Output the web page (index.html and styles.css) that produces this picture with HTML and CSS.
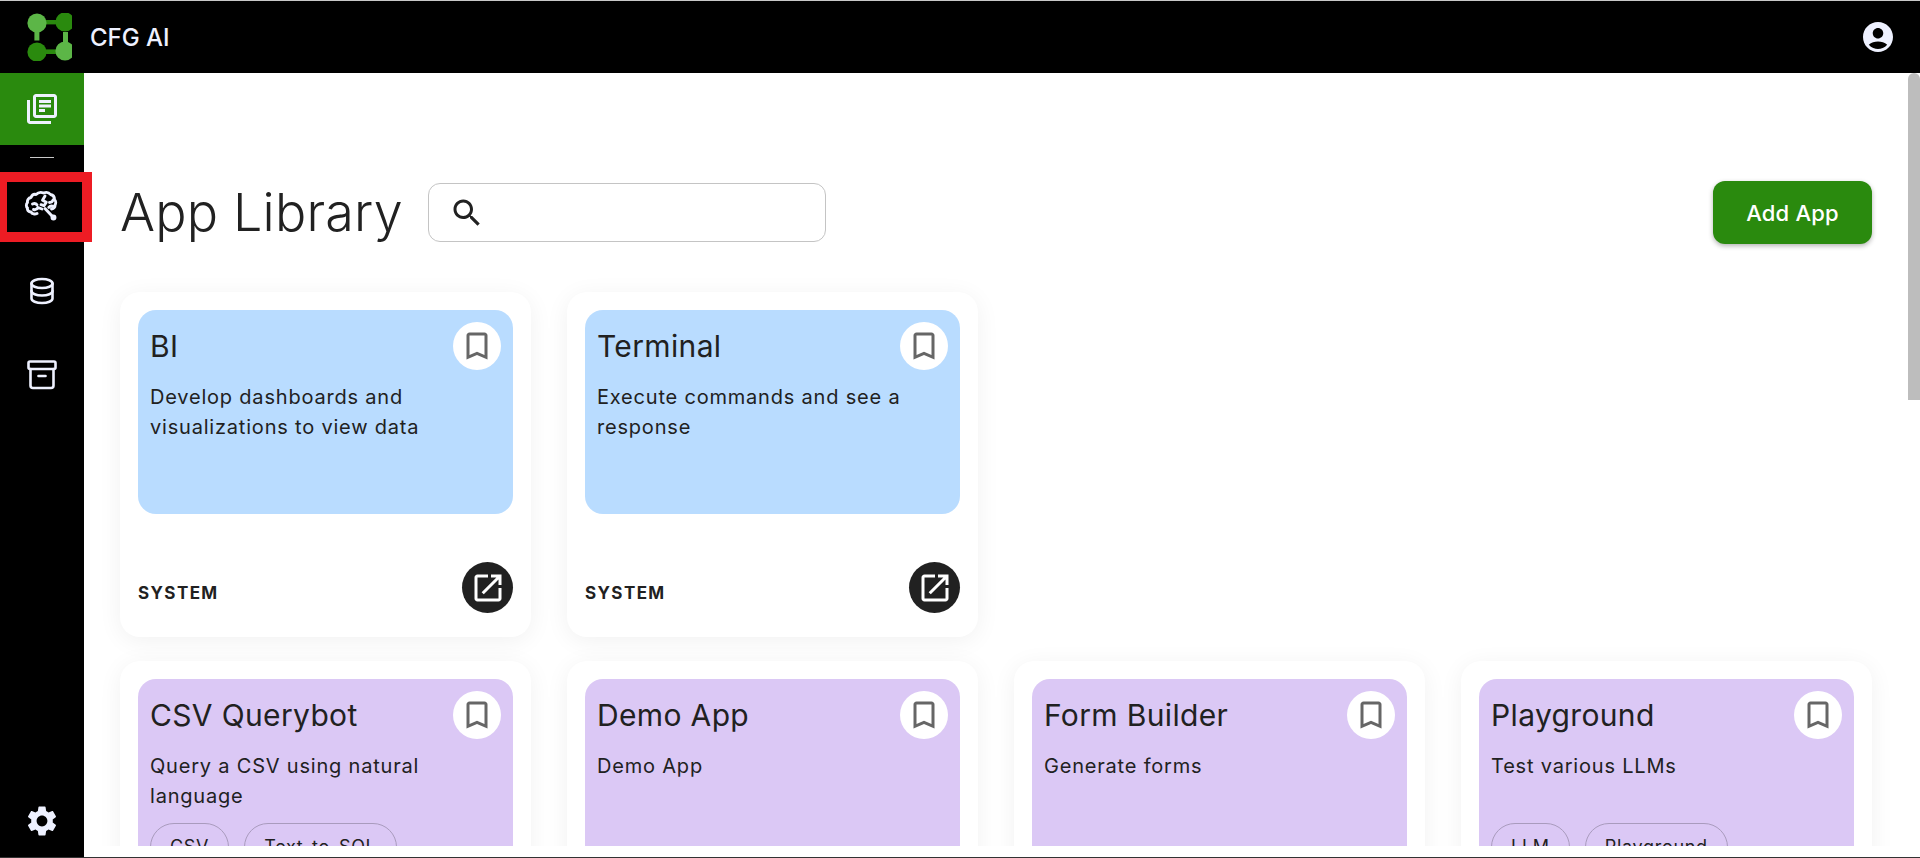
FILE: index.html
```html
<!DOCTYPE html>
<html lang="en">
<head>
    <meta charset="UTF-8">
    <meta name="viewport" content="width=device-width, initial-scale=1.0">
    <title>CFG AI - App Library</title>
    <link rel="stylesheet" href="styles.css">
</head>
<body>
    <div class="page">
        <header class="topbar">
            <svg class="logo" width="48" height="48" viewBox="0 0 48 48">
                <rect x="22" y="7" width="10" height="4.4" fill="#2a8a0e"/>
                <rect x="22" y="36.4" width="10" height="4.6" fill="#2a8a0e"/>
                <rect x="10.4" y="18" width="5" height="9.5" fill="#5cb647"/>
                <rect x="39" y="19" width="5" height="10.5" fill="#5cb647"/>
                <circle cx="13" cy="10" r="9.6" fill="#5cb647"/>
                <circle cx="41" cy="9" r="9.6" fill="#2a8a0e"/>
                <circle cx="13" cy="39" r="9.6" fill="#2a8a0e"/>
                <circle cx="41" cy="38" r="9.6" fill="#5cb647"/>
            </svg>
            <span class="brand">CFG AI</span>
            <svg class="account" width="36" height="36" viewBox="0 0 24 24"><path d="M12 2C6.48 2 2 6.48 2 12s4.48 10 10 10 10-4.48 10-10S17.52 2 12 2zm0 4c1.93 0 3.5 1.57 3.5 3.5S13.93 13 12 13s-3.5-1.57-3.5-3.5S10.07 6 12 6zm0 14c-2.03 0-4.43-.82-6.14-2.88C7.55 15.8 9.68 15 12 15s4.45.8 6.14 2.12C16.43 19.18 14.03 20 12 20z"/></svg>
        </header>

        <div class="workspace">
            <nav class="sidebar">
                <a class="nav-item active">
                    <svg width="36" height="36" viewBox="0 0 24 24"><path d="M4 6H2v14c0 1.1.9 2 2 2h14v-2H4V6zm16-4H8c-1.1 0-2 .9-2 2v12c0 1.1.9 2 2 2h12c1.1 0 2-.9 2-2V4c0-1.1-.9-2-2-2zm0 14H8V4h12v12zM10 9h8v2h-8zm0 3h4v2h-4zm0-6h8v2h-8z"/></svg>
                </a>
                <div class="nav-divider"></div>
                <a class="nav-item nav-brain">
                    <svg class="stroke-icon brain" width="36" height="36" viewBox="0 0 36 36">
                        <path d="M13 23.5c-2 1-5 .5-6-1.5-2.5 0-4-2-3.500-4-1.500-1-1.500-4 0-5.500-.5-2.500 1-4.500 3.500-5 1-2.500 3-3.500 5-3 2-2 5-2.500 7.500-1.500 2.500-1 5.500-.5 7 1.500 2.500.5 4 2.500 4 5 1.500 1.500 1.500 4 .5 5.500.2 2-1.500 3.500-3.500 4"/>
                        <path d="M8.500 14c1.800-1 3.500-.5 4.500.9M21 6l-2.500 4.200 3.800 2-2.300 3.500-3-1M9.500 19.500c2 .6 3.500-.2 4.500-2l4 1.500M29 10c-.4 1.500-1.700 2.500-3.500 2.500M29.500 16.500c-1.800-1-3.500-.6-4.700.9"/>
                        <path d="M21 18.500l7 7.500"/>
                        <circle cx="29.500" cy="27.500" r="1.500"/>
                    </svg>
                </a>
                <a class="nav-item">
                    <svg class="stroke-icon" width="36" height="36" viewBox="0 0 36 36">
                        <ellipse cx="18" cy="10.5" rx="10.5" ry="4.5"/>
                        <path d="M7.500 10.500v15c0 2.500 4.700 4.500 10.500 4.500s10.500-2 10.500-4.500v-15"/>
                        <path d="M7.500 18c0 2.500 4.700 4.500 10.500 4.500s10.500-2 10.500-4.500"/>
                    </svg>
                </a>
                <a class="nav-item">
                    <svg class="stroke-icon" width="36" height="36" viewBox="0 0 36 36">
                        <rect x="4.5" y="4.5" width="27" height="7.5" rx="1.5"/>
                        <path d="M6.500 12v16.500c0 1.500 1 2.500 2.500 2.500h18c1.500 0 2.500-1 2.500-2.500V12"/>
                        <path d="M14.500 19h7"/>
                    </svg>
                </a>
                <a class="nav-item nav-settings">
                    <svg width="36" height="36" viewBox="0 0 24 24"><path d="M19.14 12.94c.04-.3.06-.61.06-.94 0-.32-.02-.64-.07-.94l2.03-1.58c.18-.14.23-.41.12-.61l-1.92-3.32c-.12-.22-.37-.29-.59-.22l-2.39.96c-.5-.38-1.03-.7-1.62-.94l-.36-2.54c-.04-.24-.24-.41-.48-.41h-3.84c-.24 0-.43.17-.47.41l-.36 2.54c-.59.24-1.13.57-1.62.94l-2.39-.96c-.22-.08-.47 0-.59.22L2.74 8.87c-.12.21-.08.47.12.61l2.03 1.58c-.05.3-.09.63-.09.94s.02.64.07.94l-2.03 1.58c-.18.14-.23.41-.12.61l1.92 3.32c.12.22.37.29.59.22l2.39-.96c.5.38 1.03.7 1.62.94l.36 2.54c.05.24.24.41.48.41h3.84c.24 0 .44-.17.47-.41l.36-2.54c.59-.24 1.13-.56 1.62-.94l2.39.96c.22.08.47 0 .59-.22l1.92-3.32c.12-.22.07-.47-.12-.61l-2.01-1.58zM12 15.6c-1.98 0-3.6-1.62-3.6-3.6s1.62-3.6 3.6-3.6 3.6 1.62 3.6 3.6-1.62 3.6-3.6 3.6z"/></svg>
                </a>
                <div class="highlight-box"></div>
            </nav>

            <main class="main">
                <div class="scroll-area">
                    <div class="content">
                        <div class="library-head">
                            <h1>App Library</h1>
                            <div class="search-box">
                                <svg width="36" height="36" viewBox="0 0 24 24"><path d="M15.5 14h-.79l-.28-.27C15.41 12.59 16 11.11 16 9.5 16 5.91 13.09 3 9.5 3S3 5.91 3 9.5 5.91 16 9.5 16c1.61 0 3.09-.59 4.23-1.57l.27.28v.79l5 4.99L20.49 19l-4.99-5zm-6 0C7.01 14 5 11.99 5 9.5S7.01 5 9.5 5 14 7.01 14 9.5 11.99 14 9.5 14z"/></svg>
                            </div>
                            <button class="add-btn">Add App</button>
                        </div>

                        <div class="card-row">
                            <div class="card">
                                <div class="card-body blue">
                                    <div class="card-title"><h2>BI</h2><span class="bookmark"><svg width="36" height="36" viewBox="0 0 24 24"><path d="M17 3H7c-1.1 0-1.99.9-1.99 2L5 21l7-3 7 3V5c0-1.1-.9-2-2-2zm0 15l-5-2.18L7 18V5h10v13z"/></svg></span></div>
                                    <p>Develop dashboards and visualizations to view data</p>
                                </div>
                                <div class="card-foot">
                                    <span class="owner">SYSTEM</span>
                                    <span class="open"><svg width="36" height="36" viewBox="0 0 24 24"><path d="M19 19H5V5h7V3H5c-1.11 0-2 .9-2 2v14c0 1.1.89 2 2 2h14c1.1 0 2-.9 2-2v-7h-2v7zM14 3v2h3.59l-9.83 9.83 1.41 1.41L19 6.41V10h2V3h-7z"/></svg></span>
                                </div>
                            </div>
                            <div class="card">
                                <div class="card-body blue">
                                    <div class="card-title"><h2>Terminal</h2><span class="bookmark"><svg width="36" height="36" viewBox="0 0 24 24"><path d="M17 3H7c-1.1 0-1.99.9-1.99 2L5 21l7-3 7 3V5c0-1.1-.9-2-2-2zm0 15l-5-2.18L7 18V5h10v13z"/></svg></span></div>
                                    <p>Execute commands and see a response</p>
                                </div>
                                <div class="card-foot">
                                    <span class="owner">SYSTEM</span>
                                    <span class="open"><svg width="36" height="36" viewBox="0 0 24 24"><path d="M19 19H5V5h7V3H5c-1.11 0-2 .9-2 2v14c0 1.1.89 2 2 2h14c1.1 0 2-.9 2-2v-7h-2v7zM14 3v2h3.59l-9.83 9.83 1.41 1.41L19 6.41V10h2V3h-7z"/></svg></span>
                                </div>
                            </div>
                        </div>

                        <div class="card-row">
                            <div class="card">
                                <div class="card-body purple">
                                    <div class="card-title"><h2>CSV Querybot</h2><span class="bookmark"><svg width="36" height="36" viewBox="0 0 24 24"><path d="M17 3H7c-1.1 0-1.99.9-1.99 2L5 21l7-3 7 3V5c0-1.1-.9-2-2-2zm0 15l-5-2.18L7 18V5h10v13z"/></svg></span></div>
                                    <p>Query a CSV using natural language</p>
                                    <div class="tags"><span>CSV</span><span>Text-to-SQL</span></div>
                                </div>
                            </div>
                            <div class="card">
                                <div class="card-body purple">
                                    <div class="card-title"><h2>Demo App</h2><span class="bookmark"><svg width="36" height="36" viewBox="0 0 24 24"><path d="M17 3H7c-1.1 0-1.99.9-1.99 2L5 21l7-3 7 3V5c0-1.1-.9-2-2-2zm0 15l-5-2.18L7 18V5h10v13z"/></svg></span></div>
                                    <p>Demo App</p>
                                </div>
                            </div>
                            <div class="card">
                                <div class="card-body purple">
                                    <div class="card-title"><h2>Form Builder</h2><span class="bookmark"><svg width="36" height="36" viewBox="0 0 24 24"><path d="M17 3H7c-1.1 0-1.99.9-1.99 2L5 21l7-3 7 3V5c0-1.1-.9-2-2-2zm0 15l-5-2.18L7 18V5h10v13z"/></svg></span></div>
                                    <p>Generate forms</p>
                                </div>
                            </div>
                            <div class="card">
                                <div class="card-body purple">
                                    <div class="card-title"><h2>Playground</h2><span class="bookmark"><svg width="36" height="36" viewBox="0 0 24 24"><path d="M17 3H7c-1.1 0-1.99.9-1.99 2L5 21l7-3 7 3V5c0-1.1-.9-2-2-2zm0 15l-5-2.18L7 18V5h10v13z"/></svg></span></div>
                                    <p>Test various LLMs</p>
                                    <div class="tags"><span>LLM</span><span>Playground</span></div>
                                </div>
                            </div>
                        </div>
                    </div>
                    <div class="scrollbar"><div class="scroll-thumb"></div></div>
                </div>
            </main>
        </div>
    </div>
</body>
</html>
```

FILE: styles.css
```css
* {
    box-sizing: border-box;
}
html, body {
    margin: 0;
    height: 100%;
    overflow: hidden;
}
body {
    font-family: Inter, "Liberation Sans", sans-serif;
    color: #212121;
    background: #fff;
}
.page {
    height: 858px;
    display: flex;
    flex-direction: column;
    border-top: 1px solid #c8c8c8;
    border-bottom: 1px solid #333;
}

/* top bar */
.topbar {
    flex: 0 0 72px;
    background: #000;
    display: flex;
    align-items: center;
    padding: 0 24px;
}
.logo {
    flex: none;
}
.brand {
    margin-left: 18px;
    font-size: 24px;
    font-weight: 500;
    color: #eef1ff;
}
.account {
    margin-left: auto;
    fill: #eef1ff;
}

.workspace {
    flex: 1;
    display: flex;
    min-height: 0;
}

/* left nav */
.sidebar {
    position: relative;
    flex: 0 0 84px;
    background: #000;
    display: flex;
    flex-direction: column;
}
.nav-item {
    height: 72px;
    flex: none;
    display: flex;
    align-items: center;
    justify-content: center;
    margin-bottom: 12px;
    fill: #eef1ff;
}
.nav-item.active {
    background: #2a8a0e;
    margin-bottom: 0;
}
.nav-divider {
    width: 24px;
    height: 1px;
    background: #c9c9c9;
    margin: 12px auto 14px;
}
.nav-brain {
    margin-bottom: 11px;
}
.nav-settings {
    margin-top: auto;
    margin-bottom: 0;
}
.stroke-icon {
    fill: none;
    stroke: #eef1ff;
    stroke-width: 2.6;
    stroke-linecap: round;
    stroke-linejoin: round;
}
.stroke-icon.brain {
    stroke-width: 2.9;
}
/* red annotation drawn on the screenshot */
.highlight-box {
    position: absolute;
    left: 0;
    top: 99px;
    width: 92px;
    height: 70px;
    border: solid #ed1c24;
    border-width: 10px 10px 10px 7px;
}

/* main area */
.main {
    flex: 1;
    min-width: 0;
    display: flex;
    flex-direction: column;
}
.scroll-area {
    height: 773px;
    display: flex;
    overflow: hidden;
}
.content {
    flex: 1;
    min-width: 0;
    padding: 108px 36px 0;
}
.scrollbar {
    flex: 0 0 12px;
}
.scroll-thumb {
    height: 327px;
    background: #bdbdbd;
    border-radius: 6px 6px 0 0;
}
.library-head {
    display: flex;
    align-items: center;
    height: 63px;
    margin-bottom: 48px;
}
.library-head h1 {
    margin: 0 25px 0 0;
    font-size: 52px;
    font-weight: 300;
    letter-spacing: 0.2px;
    color: #212121;
}
.search-box {
    width: 398px;
    height: 59px;
    border: 1px solid #c4c4c4;
    border-radius: 12px;
    display: flex;
    align-items: center;
    padding-left: 20px;
    fill: #212121;
}
.add-btn {
    margin-left: auto;
    width: 159px;
    height: 63px;
    border: 0;
    border-radius: 12px;
    background: #2a8a0e;
    color: #fff;
    font-family: inherit;
    font-size: 22px;
    font-weight: 500;
    letter-spacing: 0.2px;
    box-shadow: 0 2px 5px rgba(0, 0, 0, 0.3);
}

/* cards */
.card-row {
    display: flex;
    gap: 36px;
    margin-bottom: 24px;
}
.card {
    flex: 0 0 411px;
    height: 345px;
    padding: 18px 18px 24px;
    border-radius: 20px;
    background: #fff;
    box-shadow: 0 4px 24px rgba(0, 0, 0, 0.06);
    display: flex;
    flex-direction: column;
}
.card-body {
    flex: 0 0 204px;
    border-radius: 18px;
    padding: 12px;
    display: flex;
    flex-direction: column;
}
.blue {
    background: #b9dcff;
}
.purple {
    background: #dbc8f5;
}
.card-title {
    display: flex;
    justify-content: space-between;
    align-items: center;
    height: 48px;
}
.card-title h2 {
    margin: 0;
    font-size: 30px;
    font-weight: 400;
    letter-spacing: 0.35px;
}
.bookmark {
    flex: none;
    width: 48px;
    height: 48px;
    border-radius: 50%;
    background: #fff;
    display: flex;
    align-items: center;
    justify-content: center;
    fill: #666;
}
.card-body p {
    margin: 12px 0 0;
    font-size: 20px;
    line-height: 30px;
    letter-spacing: 0.8px;
}
.tags {
    margin-top: auto;
    display: flex;
    gap: 15px;
}
.tags span {
    height: 48px;
    padding: 0 19px;
    border: 1px solid #a99bbd;
    border-radius: 24px;
    font-size: 18px;
    line-height: 46px;
    letter-spacing: 0.7px;
}
.card-foot {
    margin-top: auto;
    display: flex;
    justify-content: space-between;
    align-items: flex-end;
}
.owner {
    margin-bottom: 8px;
    font-size: 17px;
    line-height: 24px;
    font-weight: 650;
    letter-spacing: 1.4px;
}
.open {
    width: 51px;
    height: 51px;
    border-radius: 50%;
    background: #212121;
    display: flex;
    align-items: center;
    justify-content: center;
    fill: #fff;
}
```
